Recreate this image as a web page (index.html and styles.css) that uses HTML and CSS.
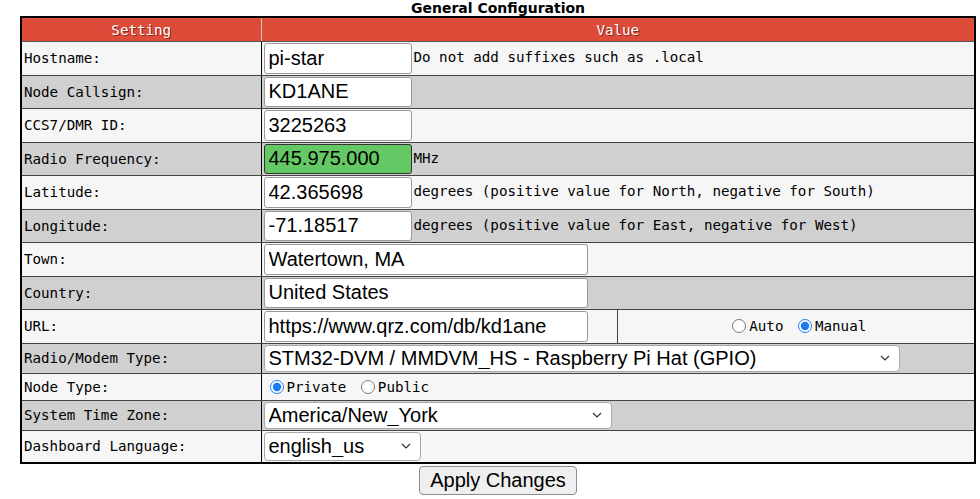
FILE: index.html
```html
<!DOCTYPE html>
<html lang="en">
<head>
    <meta charset="UTF-8">
    <title>Pi-Star - Configuration</title>
    <link rel="stylesheet" href="styles.css">
</head>
<body>
<div class="config">
    <div class="title">General Configuration</div>
    <table>
        <colgroup>
            <col class="col-setting">
            <col class="col-value">
            <col>
        </colgroup>
        <tr>
            <th>Setting</th>
            <th colspan="2">Value</th>
        </tr>
        <tr class="light">
            <td>Hostname:</td>
            <td colspan="2"><input class="field" type="text" value="pi-star">Do not add suffixes such as .local</td>
        </tr>
        <tr class="dark">
            <td>Node Callsign:</td>
            <td colspan="2"><input class="field" type="text" value="KD1ANE"></td>
        </tr>
        <tr class="light">
            <td>CCS7/DMR ID:</td>
            <td colspan="2"><input class="field" type="text" value="3225263"></td>
        </tr>
        <tr class="dark">
            <td>Radio Frequency:</td>
            <td colspan="2"><input class="field freq" type="text" value="445.975.000">MHz</td>
        </tr>
        <tr class="light">
            <td>Latitude:</td>
            <td colspan="2"><input class="field" type="text" value="42.365698">degrees (positive value for North, negative for South)</td>
        </tr>
        <tr class="dark">
            <td>Longitude:</td>
            <td colspan="2"><input class="field" type="text" value="-71.18517">degrees (positive value for East, negative for West)</td>
        </tr>
        <tr class="light">
            <td>Town:</td>
            <td colspan="2"><input class="field wide" type="text" value="Watertown, MA"></td>
        </tr>
        <tr class="dark">
            <td>Country:</td>
            <td colspan="2"><input class="field wide" type="text" value="United States"></td>
        </tr>
        <tr class="light">
            <td>URL:</td>
            <td><input class="field wide" type="text" value="https://www.qrz.com/db/kd1ane"></td>
            <td class="center">
                <label><input type="radio" name="urlAuto">Auto</label>
                <label><input type="radio" name="urlAuto" checked>Manual</label>
            </td>
        </tr>
        <tr class="dark">
            <td>Radio/Modem Type:</td>
            <td colspan="2">
                <select class="pick modem">
                    <option>STM32-DVM / MMDVM_HS - Raspberry Pi Hat (GPIO)</option>
                </select>
            </td>
        </tr>
        <tr class="light node-type">
            <td>Node Type:</td>
            <td colspan="2">
                <label><input type="radio" name="nodeType" checked>Private</label>
                <label><input type="radio" name="nodeType">Public</label>
            </td>
        </tr>
        <tr class="dark">
            <td>System Time Zone:</td>
            <td colspan="2">
                <select class="pick zone">
                    <option>America/New_York</option>
                </select>
            </td>
        </tr>
        <tr class="light">
            <td>Dashboard Language:</td>
            <td colspan="2">
                <select class="pick lang">
                    <option>english_us</option>
                </select>
            </td>
        </tr>
    </table>
    <div class="actions">
        <button type="button">Apply Changes</button>
    </div>
</div>
</body>
</html>
```

FILE: styles.css
```css
body {
    margin: 0;
    background: #fff;
    color: #000;
    font-family: "DejaVu Sans Mono", "Liberation Mono", monospace;
    font-size: 14.2px;
}
.config {
    padding: 0 4px 0 20px;
}
.title {
    font-family: "DejaVu Sans", Verdana, sans-serif;
    font-weight: bold;
    font-size: 14px;
    line-height: 16px;
    text-align: center;
    width: 956px;
}
table {
    width: 956px;
    border-collapse: collapse;
    border: 2px solid #000;
    table-layout: fixed;
}
.col-setting {
    width: 240px;
}
.col-value {
    width: 356px;
}
th {
    background: #dd4b39;
    color: #fff;
    font-weight: normal;
    text-shadow: 1px 1px #8b2a1e;
    height: 23px;
    padding: 0;
    border-right: 1px solid #c9c9c9;
    border-bottom: 1px solid #555;
}
td {
    padding: 1px 1px 1px 2px;
    border: 1px solid #444;
    white-space: nowrap;
    vertical-align: middle;
}
td:first-child {
    border-right: 1px solid #000;
}
tr.light td {
    background: #f6f6f6;
}
tr.dark td {
    background: #d0d0d0;
}
tr.node-type td {
    height: 24px;
}
.field {
    box-sizing: border-box;
    width: 148px;
    height: 30.5px;
    margin: 0 2px 0 0;
    padding: 0 4px;
    font-family: "Liberation Sans", Arial, sans-serif;
    font-size: 20px;
    border: 1px solid #9a9a9a;
    border-radius: 3px;
    background: #fff;
    color: #000;
    vertical-align: middle;
}
.field.wide {
    width: 324px;
}
.field.freq {
    background: #64c864;
    border-color: #333;
}
.center {
    text-align: center;
}
label {
    white-space: nowrap;
}
input[type="radio"] {
    width: 14px;
    height: 14px;
    margin: 0 3px 0 6px;
    vertical-align: -2px;
    accent-color: #1a7cf5;
}
.pick {
    box-sizing: border-box;
    appearance: none;
    -webkit-appearance: none;
    margin: 0;
    padding: 0 24px 0 4px;
    height: 27px;
    font-family: "Liberation Sans", Arial, sans-serif;
    font-size: 20px;
    color: #000;
    background: #fff url("data:image/svg+xml,%3Csvg xmlns='http://www.w3.org/2000/svg' width='10' height='6' viewBox='0 0 10 6'%3E%3Cpath d='M1 1l4 4 4-4' fill='none' stroke='%23333' stroke-width='1.2'/%3E%3C/svg%3E") no-repeat right 9px center;
    border: 1px solid #a8a8a8;
    border-radius: 4px;
    vertical-align: middle;
}
.modem {
    width: 636px;
}
.zone {
    width: 348px;
}
.lang {
    width: 157px;
    height: 29px;
}
.actions {
    width: 956px;
    text-align: center;
    padding-top: 2px;
}
.actions button {
    width: 158px;
    height: 29px;
    font-family: "Liberation Sans", Arial, sans-serif;
    font-size: 20px;
    color: #000;
    background: #efefef;
    border: 1px solid #8d8d8d;
    border-radius: 4px;
    padding: 0;
}
```
